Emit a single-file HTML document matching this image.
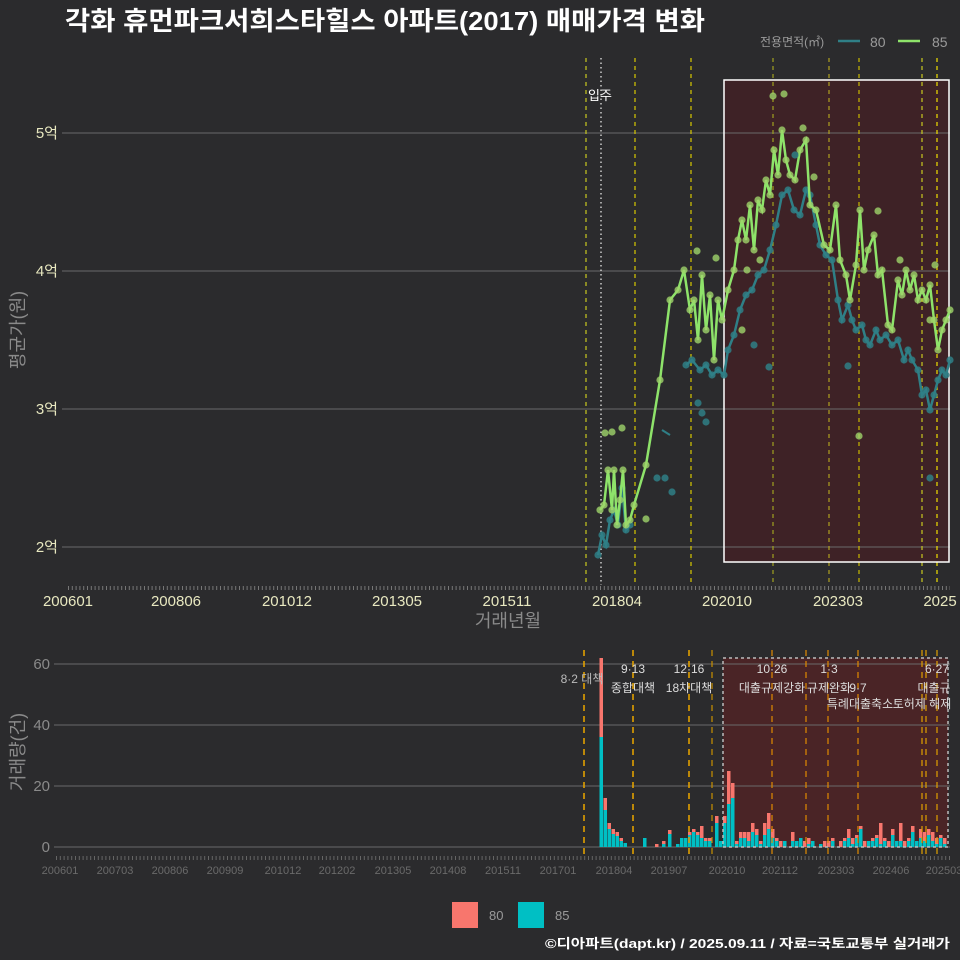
<!DOCTYPE html>
<html><head><meta charset="utf-8"><style>
html,body{margin:0;padding:0;background:#2b2b2d;}
svg{display:block;font-family:"Liberation Sans","Noto Sans CJK KR",sans-serif;}
</style></head><body>
<svg width="960" height="960" viewBox="0 0 960 960" xmlns="http://www.w3.org/2000/svg">
<defs>
<marker id="mg" markerWidth="8" markerHeight="8" refX="4" refY="4" markerUnits="userSpaceOnUse"><circle cx="4" cy="4" r="3.6" fill="#9fd46a" fill-opacity="0.8"/></marker>
<marker id="mt" markerWidth="8" markerHeight="8" refX="4" refY="4" markerUnits="userSpaceOnUse"><circle cx="4" cy="4" r="3.6" fill="#2f7f86" fill-opacity="0.85"/></marker>
</defs>
<rect width="960" height="960" fill="#2b2b2d"/>
<text x="65" y="30" font-size="26" font-weight="bold" fill="#ffffff" textLength="640" lengthAdjust="spacingAndGlyphs">각화 휴먼파크서희스타힐스 아파트(2017) 매매가격 변화</text>
<text x="760" y="46" font-size="12" fill="#9a9a9a">전용면적(㎡)</text>
<line x1="838" y1="41" x2="860" y2="41" stroke="#2f7f86" stroke-width="2.5"/>
<text x="870" y="47" font-size="14" fill="#9a9a9a">80</text>
<line x1="898" y1="41" x2="920" y2="41" stroke="#8ee36a" stroke-width="2.5"/>
<text x="932" y="47" font-size="14" fill="#9a9a9a">85</text>

<!-- main chart -->
<rect x="724" y="80" width="225" height="482" fill="#3e2226"/>
<g stroke="#6a6a6a" stroke-width="1">
<line x1="62" y1="133" x2="950" y2="133"/><line x1="62" y1="271" x2="950" y2="271"/>
<line x1="62" y1="409" x2="950" y2="409"/><line x1="62" y1="547" x2="950" y2="547"/>
</g>
<g font-size="15" fill="#e8e8c0" text-anchor="end">
<text x="58" y="138">5억</text><text x="58" y="276">4억</text><text x="58" y="414">3억</text><text x="58" y="552">2억</text>
</g>
<g stroke-dasharray="4 4" stroke-width="1.2">
<line x1="586" y1="58" x2="586" y2="585" stroke="#c8c820"/>
<line x1="635" y1="58" x2="635" y2="585" stroke="#d8c800"/>
<line x1="691" y1="58" x2="691" y2="585" stroke="#d8c800"/>
<line x1="773" y1="58" x2="773" y2="585" stroke="#a0a020"/>
<line x1="829" y1="58" x2="829" y2="585" stroke="#b0a020"/>
<line x1="859" y1="58" x2="859" y2="585" stroke="#c8b800"/>
<line x1="922" y1="58" x2="922" y2="585" stroke="#c8c820"/>
<line x1="937" y1="58" x2="937" y2="585" stroke="#f0e000"/>
</g>
<line x1="601" y1="58" x2="601" y2="585" stroke="#cccccc" stroke-width="1.5" stroke-dasharray="1.5 3"/>
<text x="588" y="100" font-size="13" fill="#ffffff">입주</text>
<rect x="724" y="80" width="225" height="482" fill="none" stroke="#ffffff" stroke-width="1.5"/>

<polyline fill="none" stroke="#2f7f86" stroke-width="2.5" marker-start="url(#mt)" marker-mid="url(#mt)" marker-end="url(#mt)" points="598,555 602,535 606,545 610,520 614,510 618,525 622,488 626,530 630,525"/>
<polyline fill="none" stroke="#2f7f86" stroke-width="2.5" marker-start="url(#mt)" marker-mid="url(#mt)" marker-end="url(#mt)" points="686,365 692,360 700,370 706,365 712,375 718,370 724,375 728,350 734,335 740,310 746,295 752,290 758,275 764,270 770,250 776,225 782,195 788,190 794,210 800,215 806,190 810,195 816,225 820,245 826,255 832,260 838,300 842,320 848,305 852,320 856,330 862,325 866,340 870,345 876,330 880,340 886,335 892,345 898,340 904,360 908,350 912,360 918,370 922,395 926,390 930,410 934,395 938,380 942,370 946,375 950,360"/>
<polyline fill="none" stroke="#8ee36a" stroke-width="2.5" marker-start="url(#mg)" marker-mid="url(#mg)" marker-end="url(#mg)" points="600,510 604,505 608,470 612,510 614,470 617,525 620,500 623,470 626,525 630,520 634,505 646,465 660,380 670,300 678,290 684,270 690,310 694,300 698,340 702,275 706,330 710,295 714,360 718,300 722,320 728,290 734,270 738,240 742,220 746,240 750,205 754,250 758,200 762,210 766,180 770,195 774,150 778,175 782,130 786,160 790,175 795,180 800,150 806,140 810,205 816,210 824,245 830,250 836,205 840,260 846,275 850,300 856,265 860,210 864,270 868,250 874,235 878,275 882,270 888,325 892,330 898,280 902,295 906,270 910,290 914,275 918,300 922,290 926,300 930,285 934,320 938,350 942,330 946,320 950,310"/>
<g fill="#9fd46a" fill-opacity="0.8">
<circle cx="605" cy="433" r="3.6"/><circle cx="612" cy="432" r="3.6"/><circle cx="622" cy="428" r="3.6"/><circle cx="646" cy="519" r="3.6"/><circle cx="773" cy="96" r="3.6"/><circle cx="784" cy="94" r="3.6"/><circle cx="803" cy="128" r="3.6"/><circle cx="814" cy="177" r="3.6"/><circle cx="878" cy="211" r="3.6"/><circle cx="859" cy="436" r="3.6"/><circle cx="697" cy="251" r="3.6"/><circle cx="716" cy="258" r="3.6"/><circle cx="747" cy="270" r="3.6"/><circle cx="742" cy="330" r="3.6"/><circle cx="760" cy="260" r="3.6"/><circle cx="900" cy="260" r="3.6"/><circle cx="935" cy="265" r="3.6"/><circle cx="930" cy="320" r="3.6"/>
</g>
<g fill="#2f7f86" fill-opacity="0.85">
<circle cx="657" cy="478" r="3.6"/><circle cx="665" cy="478" r="3.6"/><circle cx="672" cy="492" r="3.6"/><circle cx="698" cy="403" r="3.6"/><circle cx="702" cy="413" r="3.6"/><circle cx="706" cy="422" r="3.6"/><circle cx="769" cy="367" r="3.6"/><circle cx="754" cy="345" r="3.6"/><circle cx="848" cy="366" r="3.6"/><circle cx="930" cy="478" r="3.6"/><circle cx="795" cy="155" r="3.6"/>
</g>
<line x1="662" y1="430" x2="670" y2="435" stroke="#2f7f86" stroke-width="2"/>
<line x1="68" y1="588" x2="950" y2="588" stroke="#777" stroke-width="4" stroke-dasharray="1 2.8"/>
<g font-size="15" fill="#e8e8c0" text-anchor="middle">
<text x="68" y="606">200601</text><text x="176" y="606">200806</text><text x="287" y="606">201012</text><text x="397" y="606">201305</text><text x="507" y="606">201511</text><text x="617" y="606">201804</text><text x="727" y="606">202010</text><text x="838" y="606">202303</text><text x="940" y="606">2025</text>
</g>
<text x="508" y="627" font-size="18" fill="#8a8a8a" text-anchor="middle">거래년월</text>
<text transform="translate(24,330) rotate(-90)" font-size="18" fill="#8a8a8a" text-anchor="middle">평균가(원)</text>

<!-- bottom chart -->
<rect x="723" y="658" width="225" height="189" fill="#4a2426"/>
<g stroke="#6a6a6a" stroke-width="1">
<line x1="54" y1="664" x2="950" y2="664"/><line x1="54" y1="725" x2="950" y2="725"/>
<line x1="54" y1="786" x2="950" y2="786"/><line x1="54" y1="847" x2="950" y2="847"/>
</g>
<g font-size="15" fill="#8a8a8a" text-anchor="end">
<text x="50" y="669">60</text><text x="50" y="730">40</text><text x="50" y="791">20</text><text x="50" y="852">0</text>
</g>
<g>
<rect x="599.5" y="658" width="3.5" height="189" fill="#f8766d"/><rect x="599.5" y="737" width="3.5" height="110" fill="#00bfc4"/>
<rect x="603.5" y="798" width="3.5" height="49" fill="#f8766d"/><rect x="603.5" y="810" width="3.5" height="37" fill="#00bfc4"/>
<rect x="607.5" y="823" width="3.5" height="24" fill="#f8766d"/><rect x="607.5" y="829" width="3.5" height="18" fill="#00bfc4"/>
<rect x="611.5" y="829" width="3.5" height="18" fill="#f8766d"/><rect x="611.5" y="834" width="3.5" height="13" fill="#00bfc4"/>
<rect x="615.5" y="832" width="3.5" height="15" fill="#f8766d"/><rect x="615.5" y="836" width="3.5" height="11" fill="#00bfc4"/>
<rect x="619.5" y="838" width="3.5" height="9" fill="#f8766d"/><rect x="619.5" y="841" width="3.5" height="6" fill="#00bfc4"/>
<rect x="623.5" y="843" width="3.5" height="4" fill="#00bfc4"/>
<rect x="643" y="838" width="3.5" height="9" fill="#00bfc4"/>
<rect x="655" y="844" width="3.5" height="3" fill="#f8766d"/>
<rect x="662" y="841" width="3.5" height="6" fill="#f8766d"/><rect x="662" y="844" width="3.5" height="3" fill="#00bfc4"/>
<rect x="668" y="830" width="3.5" height="17" fill="#f8766d"/><rect x="668" y="834" width="3.5" height="13" fill="#00bfc4"/>
<rect x="676" y="844" width="3.5" height="3" fill="#00bfc4"/>
<rect x="680" y="838" width="3.5" height="9" fill="#00bfc4"/><rect x="684" y="838" width="3.5" height="9" fill="#00bfc4"/>
<rect x="688" y="832" width="3.5" height="15" fill="#f8766d"/><rect x="688" y="835" width="3.5" height="12" fill="#00bfc4"/>
<rect x="692" y="829" width="3.5" height="18" fill="#f8766d"/><rect x="692" y="832" width="3.5" height="15" fill="#00bfc4"/>
<rect x="696" y="832" width="3.5" height="15" fill="#f8766d"/><rect x="696" y="835" width="3.5" height="12" fill="#00bfc4"/>
<rect x="700" y="826" width="3.5" height="21" fill="#f8766d"/><rect x="700" y="838" width="3.5" height="9" fill="#00bfc4"/>
<rect x="704" y="838" width="3.5" height="9" fill="#f8766d"/><rect x="704" y="841" width="3.5" height="6" fill="#00bfc4"/>
<rect x="708" y="838" width="3.5" height="9" fill="#f8766d"/><rect x="708" y="841" width="3.5" height="6" fill="#00bfc4"/>
<rect x="715" y="816" width="3.5" height="31" fill="#f8766d"/><rect x="715" y="823" width="3.5" height="24" fill="#00bfc4"/>
<rect x="719" y="841" width="3.5" height="6" fill="#00bfc4"/>
<rect x="723" y="816" width="3.5" height="31" fill="#f8766d"/><rect x="723" y="823" width="3.5" height="24" fill="#00bfc4"/>
<rect x="727" y="771" width="3.5" height="76" fill="#f8766d"/><rect x="727" y="804" width="3.5" height="43" fill="#00bfc4"/>
<rect x="731" y="783" width="3.5" height="64" fill="#f8766d"/><rect x="731" y="798" width="3.5" height="49" fill="#00bfc4"/>
<rect x="735" y="841" width="3.5" height="6" fill="#f8766d"/><rect x="735" y="844" width="3.5" height="3" fill="#00bfc4"/>
<rect x="739" y="832" width="3.5" height="15" fill="#f8766d"/><rect x="739" y="838" width="3.5" height="9" fill="#00bfc4"/>
<rect x="743" y="832" width="3.5" height="15" fill="#f8766d"/><rect x="743" y="838" width="3.5" height="9" fill="#00bfc4"/>
<rect x="747" y="832" width="3.5" height="15" fill="#f8766d"/><rect x="747" y="841" width="3.5" height="6" fill="#00bfc4"/>
<rect x="751" y="823" width="3.5" height="24" fill="#f8766d"/><rect x="751" y="832" width="3.5" height="15" fill="#00bfc4"/>
<rect x="755" y="829" width="3.5" height="18" fill="#f8766d"/><rect x="755" y="835" width="3.5" height="12" fill="#00bfc4"/>
<rect x="759" y="841" width="3.5" height="6" fill="#f8766d"/><rect x="759" y="844" width="3.5" height="3" fill="#00bfc4"/>
<rect x="763" y="823" width="3.5" height="24" fill="#f8766d"/><rect x="763" y="835" width="3.5" height="12" fill="#00bfc4"/>
<rect x="767" y="813" width="3.5" height="34" fill="#f8766d"/><rect x="767" y="829" width="3.5" height="18" fill="#00bfc4"/>
<rect x="771" y="829" width="3.5" height="18" fill="#f8766d"/><rect x="771" y="838" width="3.5" height="9" fill="#00bfc4"/>
<rect x="775" y="838" width="3.5" height="9" fill="#f8766d"/><rect x="775" y="841" width="3.5" height="6" fill="#00bfc4"/>
<rect x="779" y="841" width="3.5" height="6" fill="#f8766d"/><rect x="783" y="841" width="3.5" height="6" fill="#00bfc4"/>
<rect x="791" y="832" width="3.5" height="15" fill="#f8766d"/><rect x="791" y="841" width="3.5" height="6" fill="#00bfc4"/>
<rect x="795" y="841" width="3.5" height="6" fill="#00bfc4"/>
<rect x="799" y="838" width="3.5" height="9" fill="#00bfc4"/><rect x="803" y="841" width="3.5" height="6" fill="#f8766d"/>
<rect x="807" y="838" width="3.5" height="9" fill="#f8766d"/><rect x="807" y="844" width="3.5" height="3" fill="#00bfc4"/>
<rect x="811" y="841" width="3.5" height="6" fill="#00bfc4"/><rect x="819" y="844" width="3.5" height="3" fill="#00bfc4"/>
<rect x="823" y="841" width="3.5" height="6" fill="#f8766d"/><rect x="827" y="841" width="3.5" height="6" fill="#f8766d"/>
<rect x="831" y="838" width="3.5" height="9" fill="#f8766d"/><rect x="831" y="841" width="3.5" height="6" fill="#00bfc4"/>
<rect x="839" y="841" width="3.5" height="6" fill="#f8766d"/>
<rect x="843" y="838" width="3.5" height="9" fill="#f8766d"/><rect x="843" y="841" width="3.5" height="6" fill="#00bfc4"/>
<rect x="847" y="829" width="3.5" height="18" fill="#f8766d"/><rect x="847" y="838" width="3.5" height="9" fill="#00bfc4"/>
<rect x="851" y="838" width="3.5" height="9" fill="#f8766d"/><rect x="851" y="844" width="3.5" height="3" fill="#00bfc4"/>
<rect x="855" y="835" width="3.5" height="12" fill="#f8766d"/><rect x="855" y="838" width="3.5" height="9" fill="#00bfc4"/>
<rect x="859" y="826" width="3.5" height="21" fill="#f8766d"/><rect x="859" y="829" width="3.5" height="18" fill="#00bfc4"/>
<rect x="863" y="841" width="3.5" height="6" fill="#f8766d"/><rect x="867" y="841" width="3.5" height="6" fill="#00bfc4"/>
<rect x="871" y="838" width="3.5" height="9" fill="#f8766d"/><rect x="871" y="841" width="3.5" height="6" fill="#00bfc4"/>
<rect x="875" y="835" width="3.5" height="12" fill="#f8766d"/><rect x="875" y="838" width="3.5" height="9" fill="#00bfc4"/>
<rect x="879" y="823" width="3.5" height="24" fill="#f8766d"/><rect x="879" y="844" width="3.5" height="3" fill="#00bfc4"/>
<rect x="883" y="838" width="3.5" height="9" fill="#f8766d"/><rect x="883" y="841" width="3.5" height="6" fill="#00bfc4"/>
<rect x="887" y="841" width="3.5" height="6" fill="#f8766d"/>
<rect x="891" y="829" width="3.5" height="18" fill="#f8766d"/><rect x="891" y="835" width="3.5" height="12" fill="#00bfc4"/>
<rect x="895" y="841" width="3.5" height="6" fill="#00bfc4"/>
<rect x="899" y="823" width="3.5" height="24" fill="#f8766d"/><rect x="899" y="841" width="3.5" height="6" fill="#00bfc4"/>
<rect x="903" y="841" width="3.5" height="6" fill="#f8766d"/>
<rect x="907" y="838" width="3.5" height="9" fill="#f8766d"/><rect x="907" y="841" width="3.5" height="6" fill="#00bfc4"/>
<rect x="911" y="826" width="3.5" height="21" fill="#f8766d"/><rect x="911" y="832" width="3.5" height="15" fill="#00bfc4"/>
<rect x="915" y="841" width="3.5" height="6" fill="#00bfc4"/>
<rect x="919" y="829" width="3.5" height="18" fill="#f8766d"/><rect x="919" y="838" width="3.5" height="9" fill="#00bfc4"/>
<rect x="923" y="832" width="3.5" height="15" fill="#f8766d"/><rect x="923" y="841" width="3.5" height="6" fill="#00bfc4"/>
<rect x="927" y="829" width="3.5" height="18" fill="#f8766d"/><rect x="927" y="835" width="3.5" height="12" fill="#00bfc4"/>
<rect x="931" y="832" width="3.5" height="15" fill="#f8766d"/><rect x="931" y="841" width="3.5" height="6" fill="#00bfc4"/>
<rect x="935" y="838" width="3.5" height="9" fill="#f8766d"/><rect x="935" y="844" width="3.5" height="3" fill="#00bfc4"/>
<rect x="939" y="835" width="3.5" height="12" fill="#f8766d"/><rect x="939" y="838" width="3.5" height="9" fill="#00bfc4"/>
<rect x="943" y="838" width="3.5" height="9" fill="#f8766d"/><rect x="943" y="844" width="3.5" height="3" fill="#00bfc4"/>
</g>
<g stroke-dasharray="6 5" stroke-width="1.6">
<line x1="584" y1="650" x2="584" y2="858" stroke="#e0a000"/>
<line x1="633" y1="650" x2="633" y2="858" stroke="#e0a000"/>
<line x1="689" y1="650" x2="689" y2="858" stroke="#e0a000"/>
<line x1="712" y1="650" x2="712" y2="858" stroke="#c89000" stroke-width="1.2"/>
<line x1="772" y1="650" x2="772" y2="858" stroke="#e08a00" stroke-width="1.2"/>
<line x1="806" y1="650" x2="806" y2="858" stroke="#e08a00" stroke-width="1.2"/>
<line x1="828" y1="650" x2="828" y2="858" stroke="#e08a00" stroke-width="1.2"/>
<line x1="858" y1="650" x2="858" y2="858" stroke="#e08a00" stroke-width="1.2"/>
<line x1="922" y1="650" x2="922" y2="858" stroke="#e0a000" stroke-width="1.2"/>
<line x1="926" y1="650" x2="926" y2="858" stroke="#e0a000" stroke-width="1.2"/>
<line x1="937" y1="650" x2="937" y2="858" stroke="#e0a000" stroke-width="1.2"/>
</g>
<rect x="723" y="658" width="225" height="189" fill="none" stroke="#bbbbbb" stroke-width="1.5" stroke-dasharray="3 3"/>
<g font-size="12" fill="#dddddd" text-anchor="middle">
<text x="582" y="683" fill="#bbbbbb">8·2 대책</text>
<text x="633" y="673">9·13</text><text x="633" y="692">종합대책</text>
<text x="689" y="673">12·16</text><text x="689" y="692">18차대책</text>
<text x="772" y="673">10·26</text><text x="772" y="692">대출규제강화</text>
<text x="829" y="673">1·3</text><text x="829" y="692">규제완화</text>
<text x="858" y="692">9·7</text>
<text x="860" y="708">특례대출축소</text><text x="922" y="708">토허제 해제</text>
<text x="937" y="673">6·27</text><text x="934" y="692">대출규</text>
</g>
<line x1="56" y1="858" x2="950" y2="858" stroke="#666" stroke-width="4" stroke-dasharray="1 2.8"/>
<g font-size="11" fill="#6a6a6a" text-anchor="middle">
<text x="60" y="874">200601</text><text x="115" y="874">200703</text><text x="170" y="874">200806</text><text x="225" y="874">200909</text><text x="283" y="874">201012</text><text x="337" y="874">201202</text><text x="393" y="874">201305</text><text x="448" y="874">201408</text><text x="503" y="874">201511</text><text x="558" y="874">201701</text><text x="614" y="874">201804</text><text x="669" y="874">201907</text><text x="727" y="874">202010</text><text x="780" y="874">202112</text><text x="836" y="874">202303</text><text x="891" y="874">202406</text><text x="944" y="874">202503</text>
</g>
<text transform="translate(24,752) rotate(-90)" font-size="18" fill="#8a8a8a" text-anchor="middle">거래량(건)</text>

<rect x="452" y="902" width="26" height="26" fill="#f8766d"/>
<text x="489" y="920" font-size="13" fill="#9a9a9a">80</text>
<rect x="518" y="902" width="26" height="26" fill="#00bfc4"/>
<text x="555" y="920" font-size="13" fill="#9a9a9a">85</text>
<text x="545" y="948" font-size="13" font-weight="bold" fill="#ffffff" textLength="405" lengthAdjust="spacingAndGlyphs">©디아파트(dapt.kr) / 2025.09.11 / 자료=국토교통부 실거래가</text>
</svg>
</body></html>
